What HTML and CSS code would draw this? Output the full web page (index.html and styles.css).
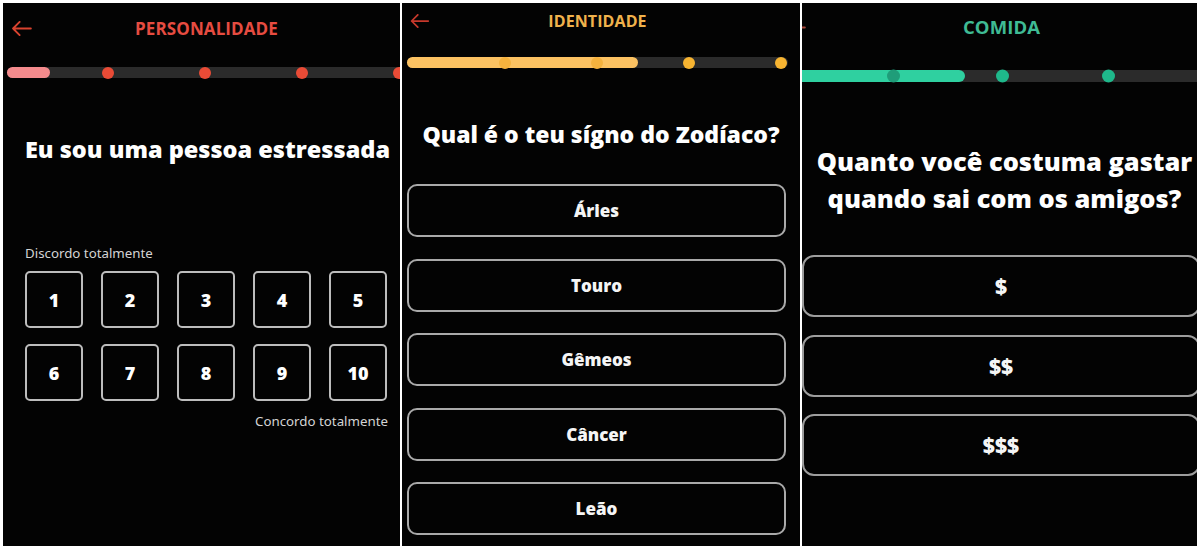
FILE: index.html
```html
<!DOCTYPE html>
<html lang="pt">
<head>
<meta charset="utf-8">
<title>Quiz</title>
<link rel="stylesheet" href="styles.css">
</head>
<body>
<div class="screens">
  <section class="screen s1">
    <header class="header">
      <svg class="back" viewBox="0 0 22 16" width="22" height="16"><path d="M21 8H2M9 1L2 8l7 7"/></svg>
      <h1 class="title">PERSONALIDADE</h1>
    </header>
    <div class="track">
      <div class="fill"></div>
      <span class="dot" style="left:95px"></span>
      <span class="dot" style="left:192px"></span>
      <span class="dot" style="left:289px"></span>
      <span class="dot" style="left:386px"></span>
    </div>
    <h2 class="question">Eu sou uma pessoa estressada</h2>
    <p class="label">Discordo totalmente</p>
    <div class="scale">
      <button class="num">1</button><button class="num">2</button><button class="num">3</button><button class="num">4</button><button class="num">5</button>
      <button class="num">6</button><button class="num">7</button><button class="num">8</button><button class="num">9</button><button class="num">10</button>
    </div>
    <p class="label right">Concordo totalmente</p>
  </section>

  <section class="screen s2">
    <header class="header">
      <svg class="back" viewBox="0 0 22 16" width="22" height="16"><path d="M21 8H2M9 1L2 8l7 7"/></svg>
      <h1 class="title">IDENTIDADE</h1>
    </header>
    <div class="track">
      <div class="fill"></div>
      <span class="dot in" style="left:92px"></span>
      <span class="dot in" style="left:184px"></span>
      <span class="dot" style="left:276px"></span>
      <span class="dot" style="left:368px"></span>
    </div>
    <h2 class="question">Qual é o teu sígno do Zodíaco?</h2>
    <div class="options">
      <button class="opt">Áries</button>
      <button class="opt">Touro</button>
      <button class="opt">Gêmeos</button>
      <button class="opt">Câncer</button>
      <button class="opt">Leão</button>
    </div>
  </section>

  <section class="screen s3">
    <header class="header">
      <svg class="back" viewBox="0 0 22 16" width="22" height="16"><path d="M21 8H2M9 1L2 8l7 7"/></svg>
      <h1 class="title">COMIDA</h1>
    </header>
    <div class="track">
      <div class="fill"></div>
      <span class="dot in" style="left:93px"></span>
      <span class="dot" style="left:202px"></span>
      <span class="dot" style="left:308px"></span>
    </div>
    <h2 class="question">Quanto você costuma gastar<br>quando sai com os amigos?</h2>
    <div class="options">
      <button class="opt">$</button>
      <button class="opt">$$</button>
      <button class="opt">$$$</button>
    </div>
  </section>
</div>
</body>
</html>
```

FILE: styles.css
```css
* { box-sizing: border-box; }

html, body {
  margin: 0;
  background: #ffffff;
}

body {
  padding: 3px 0 0 3px;
  font-family: "Open Sans", "Noto Sans", sans-serif;
}

.screens {
  display: flex;
  gap: 2px;
}

.screen {
  height: 543px;
  background: #030303;
  overflow: hidden;
  display: flex;
  flex-direction: column;
  position: relative;
}

.s1 { width: 397px; }
.s2 { width: 398px; }
.s3 { width: 395px; }

/* header */
.header {
  display: grid;
  grid-template-columns: 1fr auto 1fr;
  align-items: center;
  flex: none;
}

.back {
  fill: none;
  stroke: #d9432f;
  stroke-width: 2;
  stroke-linecap: round;
  stroke-linejoin: round;
  justify-self: start;
}

.title {
  margin: 0;
  font-weight: 700;
  letter-spacing: 0.1px;
  line-height: 1;
}

.s1 .header { height: 50px; padding-left: 8px; }
.s1 .back { width: 21px; height: 15px; }
.s1 .title { font-size: 17px; color: #e64c41; transform: translateX(1px); }

.s2 .header { height: 36px; padding-left: 7px; }
.s2 .back { width: 21px; height: 14px; stroke: #c7392c; }
.s2 .title { font-size: 16px; color: #f0b24c; transform: translateX(-7px); }

.s3 .header { height: 48px; padding-left: 0; }
.s3 .back { width: 21px; height: 15px; margin-left: -17px; stroke: #a8483a; }
.s3 .title { font-size: 18.5px; color: #3fbb94; transform: translateX(2px); }

/* progress track */
.track {
  position: relative;
  flex: none;
  background: #2b2b2b;
}

.fill {
  position: absolute;
  left: 0;
  top: 0;
  bottom: 0;
}

.dot {
  position: absolute;
  top: 50%;
  border-radius: 50%;
  transform: translateY(-50%);
}

.s1 .track {
  margin: 14px 0 0 4px;
  width: 420px;
  height: 11px;
  border-radius: 6px;
}
.s1 .fill { width: 43px; background: #f48b8d; border-radius: 6px; }
.s1 .dot { width: 12px; height: 12px; background: #e94b36; }

.s2 .track {
  margin: 18px 0 0 5px;
  width: 381px;
  height: 11px;
  border-radius: 6px;
}
.s2 .fill { width: 231px; background: #fcc262; border-radius: 6px; }
.s2 .dot { width: 12px; height: 12px; background: #f7b431; }
.s2 .dot.in { background: #f5b23e; }

.s3 .track {
  margin: 19px 0 0 -8px;
  width: 430px;
  height: 12px;
  border-radius: 6px;
}
.s3 .fill { width: 171px; background: #2fd0a0; border-radius: 6px; }
.s3 .dot { width: 13px; height: 13px; background: #1fb88b; }
.s3 .dot.in { background: #1f9d79; }

/* question */
.question {
  margin: 0;
  color: #ffffff;
  font-weight: 800;
  text-align: center;
  flex: none;
}

.s1 .question { font-size: 23.5px; line-height: 30px; margin-top: 56px; transform: translateX(6px); }
.s2 .question { font-size: 23px; line-height: 30px; margin-top: 51px; }
.s3 .question { font-size: 25.4px; line-height: 37px; margin-top: 61px; transform: translateX(5px); }

/* scale */
.label {
  margin: 0;
  font-family: "Noto Sans", "Open Sans", sans-serif;
  font-size: 13.3px;
  line-height: 16px;
  color: #d4d4d4;
}

.s1 .label { margin-top: 81px; padding-left: 22px; }
.s1 .label.right { margin-top: 12px; padding-left: 0; padding-right: 12px; text-align: right; }

.scale {
  display: grid;
  grid-template-columns: repeat(5, 58px);
  grid-auto-rows: 57px;
  column-gap: 18px;
  row-gap: 16px;
  margin: 10px 0 0 22px;
}

.num {
  font-family: inherit;
  background: transparent;
  border: 2px solid #bdbdbd;
  border-radius: 5px;
  color: #ffffff;
  font-size: 18px;
  font-weight: 800;
  padding: 0;
}

/* options */
.options {
  display: flex;
  flex-direction: column;
}

.opt {
  font-family: inherit;
  background: transparent;
  color: #f5f5f5;
  font-weight: 800;
  padding: 0;
}

.s2 .options { margin: 35px 0 0 5px; width: 379px; gap: 21.5px; }
.s2 .opt {
  height: 53px;
  border: 2px solid #a9a9a9;
  border-radius: 10px;
  font-size: 17px;
}

.s3 .options { margin: 38px 0 0 0; width: 398px; gap: 17.5px; }
.s3 .opt {
  height: 62px;
  border: 2px solid #9d9d9d;
  border-radius: 12px;
  font-size: 21px;
}
```
